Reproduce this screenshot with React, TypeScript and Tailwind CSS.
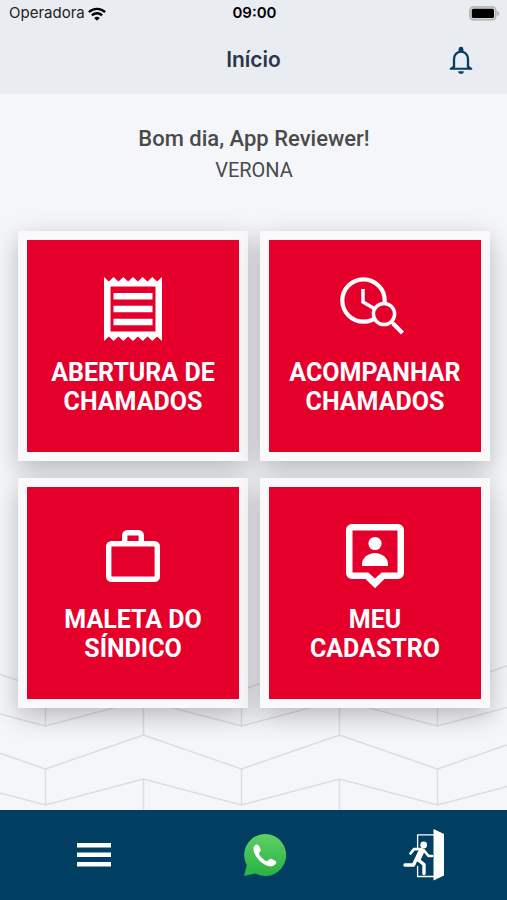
import type { ReactNode } from "react"

function WifiIcon() {
  return (
    <svg viewBox="0 0 18 14" className="h-[14px] w-[18px]" fill="none" stroke="#000" strokeWidth="2.4" aria-hidden="true">
      <path d="M0.9 5.2a11.5 11.5 0 0 1 16.2 0" />
      <path d="M3.9 8.4a7.2 7.2 0 0 1 10.2 0" />
      <path d="M9 13.8L6.2 11a4 4 0 0 1 5.6 0z" fill="#000" stroke="none" />
    </svg>
  )
}

function BatteryIcon() {
  return (
    <svg viewBox="0 0 31 15" className="h-[15px] w-[31px]" aria-hidden="true">
      <rect x="0.9" y="0.9" width="26" height="13" rx="3.6" fill="#d6d6d6" stroke="#a9a9a9" strokeWidth="1.3" />
      <rect x="2.8" y="2.8" width="22.2" height="9.2" rx="1.6" fill="#000" />
      <path d="M28.3 5a2.6 2.6 0 0 1 0 5z" fill="#a9a9a9" />
    </svg>
  )
}

function BellIcon() {
  return (
    <svg viewBox="0 0 24 28" className="h-7 w-6" aria-hidden="true">
      <path d="M5 21v-7.500C5 9 8 5.600 12 5.600s7 3.400 7 7.900V21" fill="none" stroke="#063e63" strokeWidth="2.300" />
      <path d="M9.600 5.800V3.200a2.400 2.400 0 0 1 4.800 0v2.600z" fill="#063e63" />
      <path d="M0.800 23.700v-1.500L4 20h2.200l-.4 1.700h12.400l-.4-1.700H20l3.200 2.200v1.500zM9.200 25.200h5.600a2.800 2.600 0 0 1-5.600 0z" fill="#063e63" />
    </svg>
  )
}

function ReceiptIcon() {
  return (
    <svg viewBox="0 0 58 64" className="h-16 w-[58px]" aria-hidden="true">
      <path
        fill="#fff"
        fillRule="evenodd"
        d="M0 0l4.830 4.600L9.660 0l4.830 4.600L19.320 0l4.830 4.600L29 0l4.830 4.600L38.660 0l4.830 4.600L48.320 0l4.830 4.600L58 0v64l-4.850-4.600L48.320 64l-4.830-4.600L38.660 64l-4.830-4.600L29 64l-4.850-4.600L19.320 64l-4.830-4.600L9.660 64l-4.830-4.600L0 64zM6.500 9.500v45h45v-45zM9.500 16h39v6.500h-39zM9.500 28.800h39v6.500h-39zM9.500 41.700h39v6.500h-39z"
      />
    </svg>
  )
}

function ClockSearchIcon() {
  return (
    <svg viewBox="0 0 70 64" className="h-16 w-[70px]" fill="none" stroke="#fff" aria-hidden="true">
      <circle cx="23.500" cy="23.500" r="21.200" strokeWidth="4.200" />
      <path d="M23 12v13l12 7" strokeWidth="3.500" />
      <circle cx="44" cy="37" r="10.600" fill="#e4002b" strokeWidth="3.500" />
      <path d="M51.500 45l2.500 2.500" strokeWidth="3" />
      <path d="M53 46.500l9.500 9.500" strokeWidth="4.200" />
    </svg>
  )
}

function BriefcaseIcon() {
  return (
    <svg viewBox="0 0 54 52" className="h-[52px] w-[54px]" fill="none" stroke="#fff" aria-hidden="true">
      <rect x="2.700" y="13.700" width="48.600" height="35.600" rx="2.800" strokeWidth="5.400" />
      <path d="M18.700 12V5.500a2.800 2.800 0 0 1 2.800-2.800h11a2.800 2.800 0 0 1 2.800 2.800V12" strokeWidth="5.400" />
    </svg>
  )
}

function ProfileIcon() {
  return (
    <svg viewBox="0 0 58 64" className="h-16 w-[58px]" fill="#fff" aria-hidden="true">
      <path
        fillRule="evenodd"
        d="M6 0h46a6 6 0 0 1 6 6v43a6 6 0 0 1-6 6H38.500L29 64.200 19.500 55H6a6 6 0 0 1-6-6V6a6 6 0 0 1 6-6zM6.500 6.500v42h15.800L29 54.500l6.700-6h15.800v-42z"
      />
      <circle cx="29" cy="19.500" r="6.600" />
      <path d="M16 42v-2c0-6 6-11 13-11s13 5 13 11v2z" />
    </svg>
  )
}

function MenuIcon() {
  return (
    <svg viewBox="0 0 34 24" className="h-6 w-[34px]" fill="#fff" aria-hidden="true">
      <path d="M0 0h34v4.500H0zM0 9.500h34V14H0zM0 19h34v4.500H0z" />
    </svg>
  )
}

function WhatsAppIcon() {
  return (
    <svg viewBox="0 0 42 42" className="h-[42px] w-[42px]" aria-hidden="true">
      <defs>
        <linearGradient id="whatsapp" x1="0" y1="0" x2="0" y2="1">
          <stop offset="0" stopColor="#5fd064" />
          <stop offset="1" stopColor="#28b245" />
        </linearGradient>
      </defs>
      <path fill="url(#whatsapp)" d="M21 0a21 21 0 1 1-9.600 39.600L0 42l2.800-10.800A21 21 0 0 1 21 0z" />
      <path
        fill="#fff"
        d="M9.500 14.500c0-2.200 2.200-4.300 4-3.900 1 .2 3.300 4.600 3.200 5.900-.1 1-1.900 2.400-1.700 3.300.5 2.200 5.100 6.700 7.600 7.400 1 .2 2.800-2.400 3.900-2.400 1.300 0 5.600 2.100 5.700 3.200.2 2-2.600 4.200-5.200 4.400-7.600.3-17.500-9.700-17.500-17.900z"
      />
    </svg>
  )
}

function ExitIcon() {
  return (
    <svg viewBox="0 0 42 52" className="h-[52px] w-[42px]" aria-hidden="true">
      <path d="M31 5.800H14.600V19M14.600 37v10.500H31" fill="none" stroke="#fff" strokeWidth="1.300" />
      <path d="M30.500 0L41 5v41.500L30.500 51.500z" fill="#fff" />
      <circle cx="20.700" cy="16" r="3.400" fill="#fff" />
      <g fill="none" stroke="#fff" strokeLinecap="round" strokeLinejoin="round">
        <path d="M7.500 24.500l3.500-4.300h7" strokeWidth="2.700" />
        <path d="M21 21.500l4.500 5.500h3.500" strokeWidth="2.700" />
        <path d="M18.500 22l-3.500 7.500" strokeWidth="6" />
        <path d="M15.500 31l5.500 4.500v9" strokeWidth="3.400" />
        <path d="M13 30.500l-2.500 5.500H2" strokeWidth="3.400" />
      </g>
    </svg>
  )
}

/* Chevron tiles behind the lower cards */
function TilePattern() {
  return (
    <svg className="absolute bottom-0 left-0 h-[156px] w-full" aria-hidden="true">
      <defs>
        <pattern id="tiles" width="196" height="79" patternUnits="userSpaceOnUse" y="-3">
          <g fill="none" stroke="#dcdddf" strokeWidth="1.500">
            <path d="M-53 5L45.500 39 143.500 5 241.500 39" />
            <path d="M-53 49L45.500 75 143.500 49 241.500 75" />
            <path d="M45.500 39v36M143.500 0v5M143.500 49v30" />
          </g>
        </pattern>
      </defs>
      <rect width="100%" height="100%" fill="url(#tiles)" />
    </svg>
  )
}

function Card({ icon, children }: { icon: ReactNode; children: ReactNode }) {
  return (
    <button
      type="button"
      className="flex aspect-square flex-col items-center border-[9px] border-[#f9f9f9] bg-[#e4002b] shadow-[0_8px_24px_rgba(0,0,0,0.25)]"
    >
      <span className="mt-[37px] flex h-16 items-center justify-center">{icon}</span>
      <span className="mt-[17px] text-[25px] leading-[29px] font-bold text-white">{children}</span>
    </button>
  )
}

export default function App() {
  return (
    <div className="flex min-h-screen flex-col bg-[#f5f6fa] font-['Roboto',sans-serif]">
      <header className="bg-[#e9edf1]">
        <div className="grid h-[27px] grid-cols-3 items-center pr-[7px] pl-[9px] font-['Inter',sans-serif] text-[15px] text-[#222]">
          <div className="flex items-center gap-[3px]">
            Operadora
            <WifiIcon />
          </div>
          <div className="text-center font-semibold text-black">09:00</div>
          <div className="flex justify-end">
            <BatteryIcon />
          </div>
        </div>
        <div className="grid h-[67px] grid-cols-3 items-center px-[34px] pb-px">
          <h1 className="col-start-2 text-center font-['Inter',sans-serif] text-[21px] leading-7 font-semibold text-[#2c3549]">Início</h1>
          <button type="button" aria-label="Notificações" className="justify-self-end">
            <BellIcon />
          </button>
        </div>
      </header>

      <main className="relative flex-1">
        <TilePattern />
        <div className="relative pt-[30px] pr-[17px] pl-[18px]">
          <div className="text-center text-[#4a4a4a]">
            <h2 className="text-[22px] leading-[30px] font-medium">Bom dia, App Reviewer!</h2>
            <p className="text-xl leading-8">VERONA</p>
          </div>
          <div className="mt-[45px] grid grid-cols-2 gap-x-3 gap-y-[17px]">
            <Card icon={<ReceiptIcon />}>
              ABERTURA DE
              <br />
              CHAMADOS
            </Card>
            <Card icon={<ClockSearchIcon />}>
              ACOMPANHAR
              <br />
              CHAMADOS
            </Card>
            <Card icon={<BriefcaseIcon />}>
              MALETA DO
              <br />
              SÍNDICO
            </Card>
            <Card icon={<ProfileIcon />}>
              MEU
              <br />
              CADASTRO
            </Card>
          </div>
        </div>
      </main>

      <nav className="relative grid h-[90px] grid-cols-[188fr_153fr_166fr] place-items-center bg-[#003e62]">
        <button type="button" aria-label="Menu">
          <MenuIcon />
        </button>
        <button type="button" aria-label="WhatsApp">
          <WhatsAppIcon />
        </button>
        <button type="button" aria-label="Sair">
          <ExitIcon />
        </button>
      </nav>
    </div>
  )
}
